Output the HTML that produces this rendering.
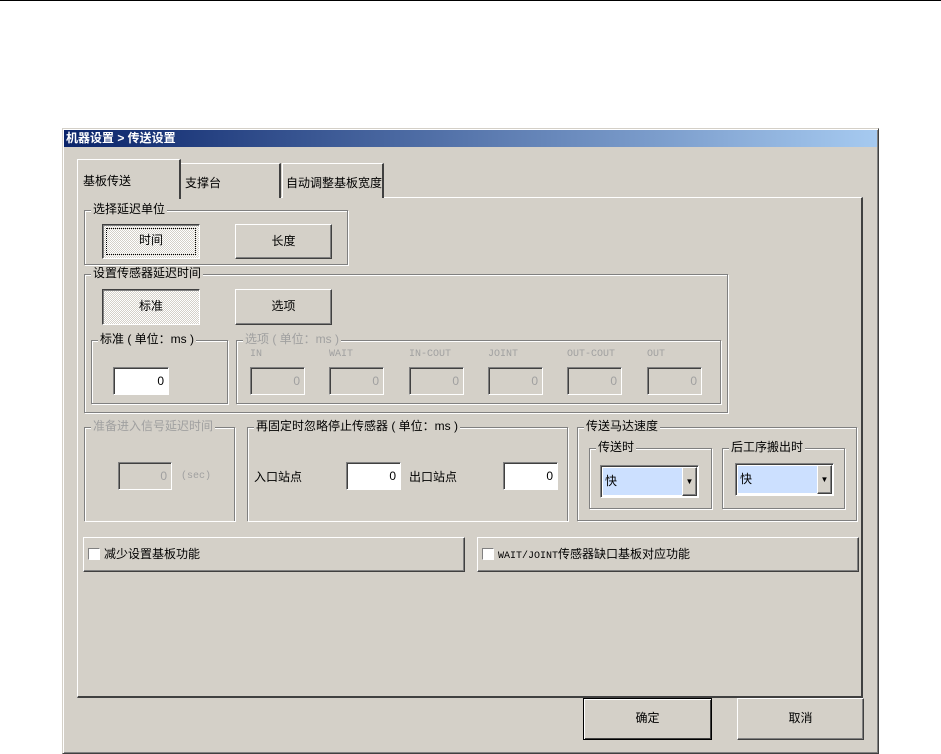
<!DOCTYPE html>
<html><head><meta charset="utf-8"><style>
*{margin:0;padding:0;box-sizing:border-box}
body{width:941px;height:753px;background:#fff;position:relative;overflow:hidden;font-family:"Liberation Sans","Noto Sans CJK SC",sans-serif;font-size:12px;color:#000}
.a{position:absolute}
.win{left:62px;top:128px;width:817px;height:626px;background:#d4d0c8;border:1px solid #d4d0c8;border-right-color:#404040;border-bottom-color:#404040;box-shadow:inset 1px 1px 0 #fff,inset -1px -1px 0 #808080}
.title{left:64px;top:130px;width:813px;height:17px;background:linear-gradient(90deg,#0a246a,#a6caf0);color:#fff;font-weight:bold;font-size:12px;line-height:17px;padding-left:2px}
.tab{background:#d4d0c8;border-top:1px solid #fff;border-left:1px solid #fff;border-right:2px solid #404040;padding:10px 0 0 4px;font-size:12px;white-space:nowrap;overflow:hidden}
.panel{left:77px;top:197px;width:786px;height:501px;border:1px solid #fff;border-right:2px solid #404040;border-bottom:2px solid #404040}
.grp{border:1px solid #808080;box-shadow:1px 1px 0 #fff,inset 1px 1px 0 #fff}
.lg{position:absolute;top:-9px;left:6px;background:#d4d0c8;padding:0 2px;font-size:12px;line-height:15px;white-space:nowrap}
.dis{color:#a0a0a0}
.btn{background:#d4d0c8;border:1px solid #fff;border-right-color:#404040;border-bottom-color:#404040;box-shadow:inset -1px -1px 0 #808080;text-align:center;font-size:12px}
.pr{background:repeating-conic-gradient(#fff 0 25%,#d4d0c8 0 50%) 0 0/2px 2px;border:1px solid #404040;border-right-color:#fff;border-bottom-color:#fff;box-shadow:inset 1px 1px 0 #808080}
.inp{background:#fff;border:1px solid #808080;border-right-color:#fff;border-bottom-color:#fff;box-shadow:inset 1px 1px 0 #404040;text-align:right;padding-right:4px;font-size:12px}
.dinp{background:#d4d0c8;color:#a0a0a0}
.sl{font-size:10px;color:#a0a0a0;font-family:"Liberation Mono",monospace}
.combo{background:#fff;border:1px solid #808080;border-right-color:#fff;border-bottom-color:#fff;box-shadow:inset 1px 1px 0 #404040}
</style></head><body>
<div class="a" style="left:0;top:0;width:941px;height:1px;background:#000"></div>
<div class="a win"></div>
<div class="a title">机器设置 &gt; 传送设置</div>

<div class="a panel"></div>
<div class="a tab" style="left:180px;top:163px;width:101px;height:35px">支撑台</div>
<div class="a tab" style="left:282px;top:163px;width:102px;height:35px;padding-left:3px">自动调整基板宽度</div>
<div class="a tab" style="left:77px;top:159px;width:104px;height:40px;border-bottom:none;padding-top:12px;padding-left:5px">基板传送</div>

<div class="a grp" style="left:84px;top:210px;width:264px;height:55px"><span class="lg">选择延迟单位</span></div>
<div class="a btn pr" style="left:102px;top:224px;width:98px;height:35px;line-height:31px;outline:1px dotted #000;outline-offset:-5px">时间</div>
<div class="a btn" style="left:235px;top:224px;width:97px;height:35px;line-height:32px">长度</div>

<div class="a grp" style="left:84px;top:274px;width:644px;height:139px"><span class="lg">设置传感器延迟时间</span></div>
<div class="a btn pr" style="left:102px;top:289px;width:98px;height:36px;line-height:32px">标准</div>
<div class="a btn" style="left:235px;top:289px;width:97px;height:36px;line-height:33px">选项</div>

<div class="a grp" style="left:91px;top:340px;width:137px;height:64px"><span class="lg">标准 ( 单位：ms )</span></div>
<div class="a inp" style="left:113px;top:367px;width:56px;height:28px;line-height:26px">0</div>

<div class="a grp" style="left:236px;top:340px;width:485px;height:64px"><span class="lg dis">选项 ( 单位：ms )</span></div>
<div class="a sl" style="left:250px;top:349px">IN</div>
<div class="a sl" style="left:329px;top:349px">WAIT</div>
<div class="a sl" style="left:409px;top:349px">IN-COUT</div>
<div class="a sl" style="left:488px;top:349px">JOINT</div>
<div class="a sl" style="left:567px;top:349px">OUT-COUT</div>
<div class="a sl" style="left:647px;top:349px">OUT</div>
<div class="a inp dinp" style="left:250px;top:367px;width:55px;height:28px;line-height:26px">0</div>
<div class="a inp dinp" style="left:329px;top:367px;width:55px;height:28px;line-height:26px">0</div>
<div class="a inp dinp" style="left:409px;top:367px;width:55px;height:28px;line-height:26px">0</div>
<div class="a inp dinp" style="left:488px;top:367px;width:55px;height:28px;line-height:26px">0</div>
<div class="a inp dinp" style="left:567px;top:367px;width:55px;height:28px;line-height:26px">0</div>
<div class="a inp dinp" style="left:647px;top:367px;width:55px;height:28px;line-height:26px">0</div>

<div class="a grp" style="left:84px;top:427px;width:151px;height:94px;border-bottom:none"><span class="lg dis">准备进入信号延迟时间</span></div>
<div class="a inp dinp" style="left:118px;top:462px;width:54px;height:28px;line-height:26px">0</div>
<div class="a sl" style="left:181px;top:471px">(sec)</div>

<div class="a grp" style="left:247px;top:427px;width:321px;height:94px;border-bottom:none"><span class="lg">再固定时忽略停止传感器 ( 单位：ms )</span></div>
<div class="a" style="left:254px;top:468px">入口站点</div>
<div class="a inp" style="left:346px;top:462px;width:55px;height:28px;line-height:26px">0</div>
<div class="a" style="left:409px;top:468px">出口站点</div>
<div class="a inp" style="left:503px;top:462px;width:55px;height:28px;line-height:26px">0</div>

<div class="a grp" style="left:577px;top:427px;width:280px;height:94px"><span class="lg">传送马达速度</span></div>
<div class="a grp" style="left:589px;top:448px;width:123px;height:61px"><span class="lg">传送时</span></div>
<div class="a combo" style="left:600px;top:465px;width:99px;height:33px"><div class="a" style="left:2px;top:2px;width:79px;height:27px;background:#cce0ff;line-height:27px;padding-left:2px">快</div><div class="a btn" style="left:81px;top:1px;width:15px;height:29px;font-size:8px;line-height:27px">▼</div></div>
<div class="a grp" style="left:722px;top:448px;width:123px;height:61px"><span class="lg">后工序搬出时</span></div>
<div class="a combo" style="left:735px;top:463px;width:99px;height:33px"><div class="a" style="left:2px;top:2px;width:79px;height:27px;background:#cce0ff;line-height:27px;padding-left:2px">快</div><div class="a btn" style="left:81px;top:1px;width:15px;height:29px;font-size:8px;line-height:27px">▼</div></div>

<div class="a btn" style="left:83px;top:537px;width:382px;height:35px;text-align:left;padding:7px 0 0 4px">
<span style="display:inline-block;width:12px;height:12px;background:#fff;border:1px solid #808080;border-right-color:#fff;border-bottom-color:#fff;vertical-align:-2px;margin-right:4px"></span>减少设置基板功能</div>
<div class="a btn" style="left:477px;top:537px;width:382px;height:35px;text-align:left;padding:7px 0 0 4px">
<span style="display:inline-block;width:12px;height:12px;background:#fff;border:1px solid #808080;border-right-color:#fff;border-bottom-color:#fff;vertical-align:-2px;margin-right:4px"></span><span style="font-family:'Liberation Mono',monospace;font-size:10px">WAIT/JOINT</span>传感器缺口基板对应功能</div>

<div class="a btn" style="left:583px;top:698px;width:129px;height:42px;line-height:38px;border:1px solid #000;box-shadow:inset 1px 1px 0 #fff,inset -1px -1px 0 #404040">确定</div>
<div class="a btn" style="left:737px;top:698px;width:127px;height:42px;line-height:39px">取消</div>
</body></html>
